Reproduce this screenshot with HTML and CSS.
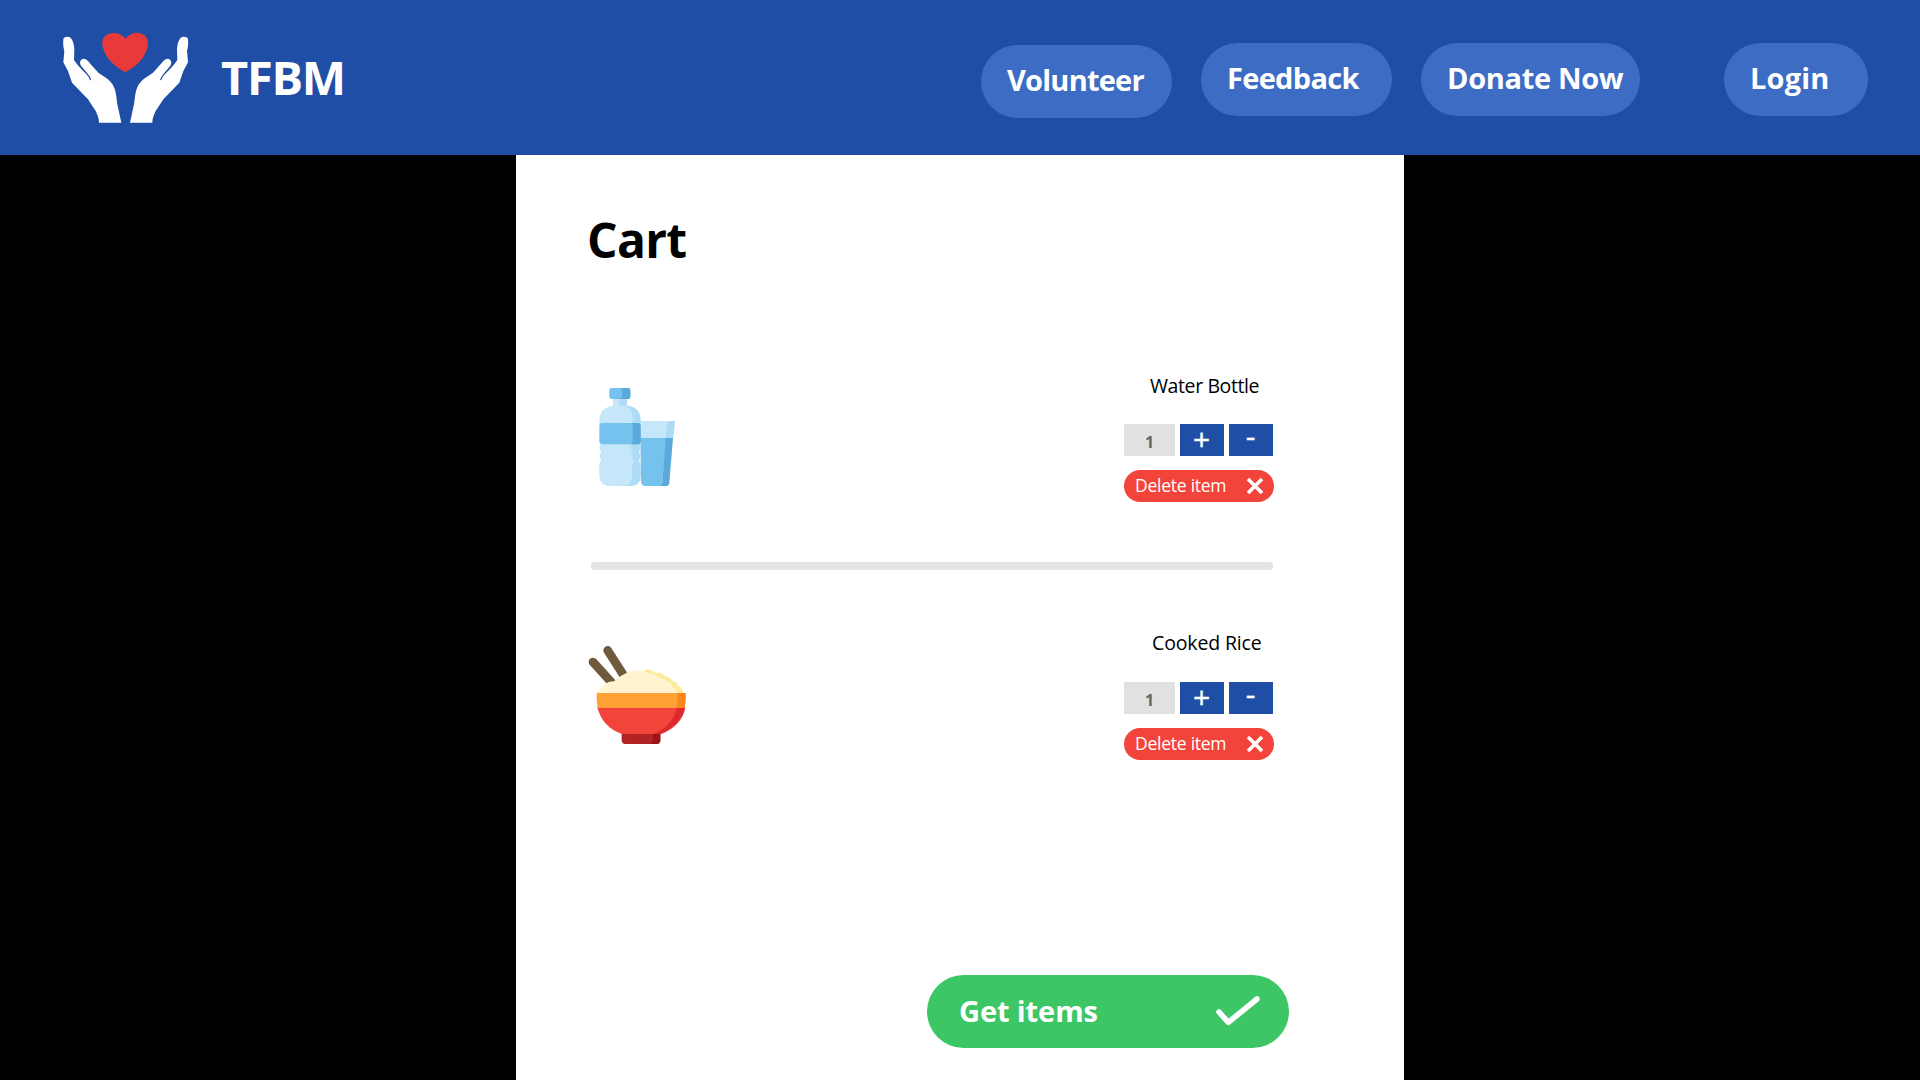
FILE: index.html
```html
<!DOCTYPE html>
<html lang="en">
<head>
<meta charset="utf-8">
<title>TFBM - Cart</title>
<link rel="stylesheet" href="styles.css">
</head>
<body>
<header class="header">
  <div class="brand">
    <svg class="logo" viewBox="60 60 402 291" aria-hidden="true">
      <defs>
        <path id="hand" d="M70 88C70 79 88 77 94 86C101 95 103 110 103 121L102 150C110 163 123 177 135 188C142 194 148 203 150 210C153 213 155 209 151 203C145 190 132 180 123 167C117 157 121 147 131 146C140 146 144 153 149 159L175 188L202 206C215 217 222 227 226 243C230 260 230 278 234 292L244 338H177C177 325 172 314 167 303L144 268L96 218L84 183L70 157L73 123C69 110 69 99 70 88Z"/>
      </defs>
      <use href="#hand" fill="#fff"/>
      <use href="#hand" fill="#fff" transform="translate(514 0) scale(-1 1)"/>
      <path fill="#e93a3a" d="M256 86C271 69 290 65 305 71C321 77 326 92 323 109C317 142 291 168 256 187C221 168 194 142 188 109C184 91 191 77 207 71C223 66 244 70 256 86Z"/>
    </svg>
    <span class="brand-name">TFBM</span>
  </div>
  <nav class="nav">
    <a class="pill pill-volunteer">Volunteer</a>
    <a class="pill pill-feedback">Feedback</a>
    <a class="pill pill-donate">Donate Now</a>
    <a class="pill pill-login">Login</a>
  </nav>
</header>
<main class="cart">
  <h1 class="title">Cart</h1>
  <section class="item">
    <svg class="picture bottle" viewBox="30 3 330 387" aria-hidden="true">
      <path fill="#c5e7f9" d="M181 153H285L279 206H181Z"/>
      <path fill="#aedcf5" d="M263 153H285L279 206H257Z"/>
      <path fill="#76c2ee" d="M181 204H259L246 348H196Q185 348 183 336Z"/>
      <path fill="#5aa9da" d="M257 204H279L268 338Q267 348 257 348H238Q246 347 247 337Z"/>
      <path fill="#c5e7f9" d="M99 85H141V107Q182 111 182 153V162L178 165V218Q187 236 176 247Q187 260 176 271L182 282V315Q182 348 149 348H91Q58 348 58 315V282L64 271Q53 260 64 247Q53 236 62 222V165L58 162V153Q58 113 99 107Z"/>
      <path fill="#aedcf5" d="M118 85H141V107Q182 111 182 153V162H158V141Q157 119 137 108H118ZM157 222H180Q186 237 176 247Q187 260 176 271L182 282V315Q182 348 149 348H129Q157 346 157 315V282L162 271Q147 260 159 247Q147 237 157 222Z"/>
      <rect x="58" y="159" width="124" height="64" rx="9" fill="#76c2ee"/>
      <path fill="#5aa9da" d="M149 159H173Q182 159 182 168V214Q182 223 173 223H149Q158 222 158 213V169Q158 160 149 159Z"/>
      <rect x="88" y="54" width="63" height="33" rx="7" fill="#76c2ee"/>
      <path fill="#5aa9da" d="M120 54H144Q151 54 151 61V80Q151 87 144 87H120Q127 86 127 79V61Q127 55 120 54Z"/>
    </svg>
    <div class="controls">
      <h2 class="name name-water">Water Bottle</h2>
      <div class="quantity">
        <span class="count">1</span>
        <button class="step plus">+</button>
        <button class="step minus">-</button>
      </div>
      <button class="delete">Delete item
        <svg class="cross" viewBox="0 0 18 18" aria-hidden="true"><path d="M2 2L16 16M16 2L2 16"/></svg>
      </button>
    </div>
  </section>
  <hr class="divider">
  <section class="item">
    <svg class="picture rice" viewBox="45 -3 330 363" aria-hidden="true">
      <path stroke="#705a3e" stroke-width="26" stroke-linecap="round" d="M69 96L128 161M113 61L163 139"/>
      <path fill="#ffe99b" d="M200 129L221 123Q229 114 242 121L258 129Q272 124 283 138Q299 140 306 152Q320 155 325 167Q338 174 341 190H200Z"/>
      <path fill="#fff4cf" d="M79 190Q91 172 108 162Q113 154 132 154Q150 137 169 129Q179 121 194 124Q209 118 222 124Q232 125 237 131Q249 127 258 137Q269 138 275 147Q286 145 290 155Q303 158 306 168Q318 176 323 190Z"/>
      <path fill="#b22424" d="M155 310H271V331Q271 342 260 342H166Q155 342 155 331Z"/>
      <path fill="#9b1219" d="M249 310H271V331Q271 342 260 342H238Q249 341 249 331Z"/>
      <path fill="#f2443b" d="M82 232H346Q337 286 275 312H156Q98 293 82 232Z"/>
      <path fill="#dc292f" d="M321 232H345Q334 286 271 312H248Q308 292 321 232Z"/>
      <path fill="#ffa134" d="M80 189H347Q348 212 344 233H83Q79 212 80 189Z"/>
      <path fill="#f98719" d="M323 189H347Q348 212 344 233H321Q325 211 323 189Z"/>
    </svg>
    <div class="controls">
      <h2 class="name name-rice">Cooked Rice</h2>
      <div class="quantity">
        <span class="count">1</span>
        <button class="step plus">+</button>
        <button class="step minus">-</button>
      </div>
      <button class="delete">Delete item
        <svg class="cross" viewBox="0 0 18 18" aria-hidden="true"><path d="M2 2L16 16M16 2L2 16"/></svg>
      </button>
    </div>
  </section>
  <button class="submit">Get items
    <svg class="check" viewBox="0 0 46 32" aria-hidden="true"><path d="M4 18L13.3 28.4L42 5"/></svg>
  </button>
</main>
</body>
</html>
```
FILE: styles.css
```css
* {
  box-sizing: border-box;
}

body {
  margin: 0;
  height: 1080px;
  overflow: hidden;
  background: #000;
  color: #000;
  font-family: "Open Sans", "Noto Sans", sans-serif;
}

button {
  border: 0;
  padding: 0;
  margin: 0;
  color: #fff;
  font-family: inherit;
}

.header {
  display: flex;
  justify-content: space-between;
  height: 155px;
  padding: 0 52px 0 60px;
  background: #1e4ea6;
  color: #fff;
}

.brand {
  display: flex;
  align-items: flex-start;
  gap: 27px;
  padding-top: 30px;
}

.logo {
  width: 134px;
  height: 97px;
}

.brand-name {
  padding-top: 14px;
  font-size: 47px;
  font-weight: 700;
  line-height: 67px;
  letter-spacing: -1.3px;
}

.nav {
  display: flex;
  align-items: flex-start;
  padding-top: 43px;
}

.pill {
  height: 73px;
  padding-left: 26px;
  border-radius: 37px;
  background: #3c6cc4;
  font-size: 29px;
  font-weight: 700;
  line-height: 70px;
  white-space: nowrap;
}

.pill-volunteer {
  width: 191px;
  margin: 2px 29px 0 0;
  letter-spacing: -0.77px;
}

.pill-feedback {
  width: 191px;
  margin-right: 29px;
  letter-spacing: -0.7px;
}

.pill-donate {
  width: 219px;
  margin-right: 84px;
  letter-spacing: -0.33px;
}

.pill-login {
  width: 144px;
  letter-spacing: 0.2px;
}

.cart {
  width: 888px;
  height: 925px;
  margin: 0 auto;
  padding: 55px 115px 0 69px;
  background: #fff;
}

.title {
  margin: 0 0 101px 2px;
  font-size: 48px;
  line-height: 60px;
  letter-spacing: -0.7px;
}

.item {
  display: flex;
  justify-content: space-between;
  align-items: flex-start;
  width: 689px;
  height: 131px;
}

.picture {
  width: 110px;
}

.bottle {
  height: 129px;
  margin-left: 5px;
}

.rice {
  height: 121px;
}

.controls {
  display: flex;
  flex-direction: column;
  width: 150px;
}

.name {
  margin: 0 0 25px;
  font-size: 19.5px;
  font-weight: 400;
  line-height: 28px;
  white-space: nowrap;
}

.name-water {
  margin-bottom: 24px;
  padding: 1px 0 0 26px;
  letter-spacing: -0.4px;
}

.name-rice {
  padding-left: 28px;
  letter-spacing: -0.15px;
}

.quantity {
  display: flex;
  gap: 5px;
  margin-bottom: 14px;
}

.count {
  width: 51px;
  height: 32px;
  background: #e1e1e1;
  color: #666;
  font-size: 16px;
  font-weight: 700;
  line-height: 36px;
  text-align: center;
}

.step {
  display: flex;
  justify-content: center;
  align-items: flex-start;
  width: 44px;
  height: 32px;
  padding-right: 1px;
  background: #1e4ea6;
  font-size: 30px;
  -webkit-text-stroke: 0.4px #fff;
}

.plus {
  line-height: 30px;
}

.minus {
  line-height: 23px;
}

.delete {
  display: flex;
  justify-content: space-between;
  align-items: flex-start;
  height: 32px;
  padding: 0 10px 0 11px;
  border-radius: 16px;
  background: #f2443b;
  font-size: 17.5px;
  line-height: 30px;
  letter-spacing: -0.25px;
}

.cross {
  width: 18px;
  height: 18px;
  margin-top: 7px;
  fill: none;
  stroke: #fff;
  stroke-width: 3.6;
}

.divider {
  width: 682px;
  height: 8px;
  margin: 60px 0 59px 6px;
  border: 0;
  border-radius: 3px;
  background: #e4e4e4;
}

.submit {
  display: flex;
  justify-content: space-between;
  align-items: flex-start;
  width: 362px;
  height: 73px;
  margin: 215px 0 0 342px;
  padding: 0 28px 0 32px;
  border-radius: 37px;
  background: #3dc666;
  font-size: 29px;
  font-weight: 700;
  line-height: 71px;
  letter-spacing: -0.1px;
}

.check {
  width: 46px;
  height: 32px;
  margin-top: 19px;
  fill: none;
  stroke: #fff;
  stroke-width: 5.5;
  stroke-linecap: round;
  stroke-linejoin: round;
}
```
